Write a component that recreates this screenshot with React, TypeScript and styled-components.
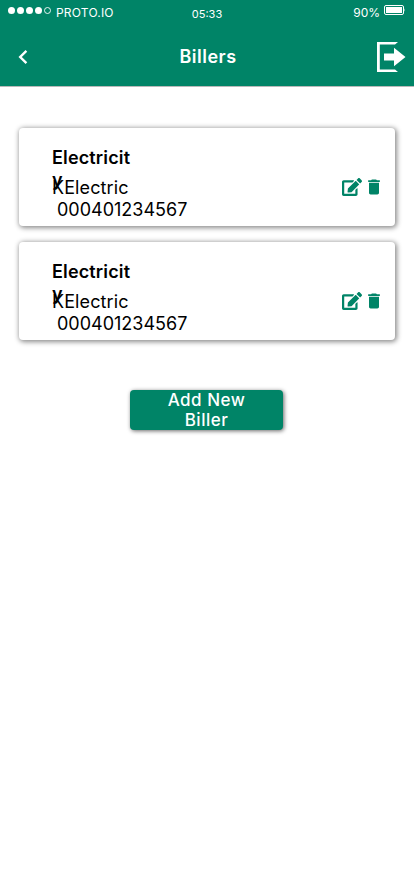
import React from "react";
import styled, { createGlobalStyle } from "styled-components";
import { FaEdit } from "react-icons/fa";
import { MdDelete } from "react-icons/md";

const GREEN = "#008467";

const GlobalStyle = createGlobalStyle`
  * { box-sizing: border-box; }
  body { margin: 0; background: #fff; font-family: Inter, "Liberation Sans", sans-serif; }
  p, h1, h2 { margin: 0; }
`;

const Screen = styled.div`
  width: 414px;
  height: 896px;
  background: #fff;
  overflow: hidden;
`;

const Header = styled.header`
  height: 86px;
  background: ${GREEN};
  color: #fff;
  box-shadow: 0 1px 0 #b9b9b9;
`;

const StatusBar = styled.div`
  height: 24px;
  display: grid;
  grid-template-columns: 1fr 60px 1fr;
  padding: 0 8px;
  font-size: 12px;
  line-height: 15px;
`;

const Carrier = styled.div`
  display: flex;
  align-items: flex-start;
  gap: 5px;
  padding-top: 5px;
  letter-spacing: 0.2px;
`;

const Signal = styled.svg`
  display: block;
  margin-top: 2px;
`;

const Clock = styled.time`
  padding-top: 7px;
  font-size: 11px;
  text-align: center;
`;

const Battery = styled.div`
  display: flex;
  justify-content: flex-end;
  gap: 4px;
  padding-top: 5px;
`;

const Nav = styled.div`
  display: grid;
  grid-template-columns: 56px 1fr 62px;
  align-items: center;
  height: 62px;
  padding: 4px 8px 0 16px;
`;

const Title = styled.h1`
  font-size: 18px;
  line-height: 22px;
  font-weight: 600;
  text-align: center;
  letter-spacing: 0.5px;
`;

const IconButton = styled.button<{ $end?: boolean }>`
  display: flex;
  justify-content: ${(p) => (p.$end ? "flex-end" : "flex-start")};
  padding: 0;
  border: 0;
  background: none;
  color: inherit;
`;

const Main = styled.main`
  display: flex;
  flex-direction: column;
  align-items: center;
  padding: 42px 18px 0;
`;

const List = styled.div`
  display: flex;
  flex-direction: column;
  gap: 16px;
  width: 376px;
`;

const Card = styled.article`
  display: flex;
  justify-content: space-between;
  height: 98px;
  padding: 19px 11px 0 33px;
  border-radius: 4px;
  background: #fff;
  box-shadow: 1px 1px 5px 1px rgba(0, 0, 0, 0.45);
  color: #000;
  font-size: 18px;
  line-height: 22px;
`;

const Details = styled.div`
  display: flex;
  flex-direction: column;
`;

const Category = styled.h2`
  width: 80px;
  height: 30px;
  font-size: 18px;
  line-height: 22px;
  font-weight: 600;
  letter-spacing: 0.15px;
  overflow-wrap: anywhere;
`;

const Company = styled.p`
  letter-spacing: 0.1px;
`;

const Account = styled.p`
  padding-left: 5px;
`;

const Actions = styled.div`
  display: flex;
  align-items: center;
  gap: 2px;
  height: 22px;
  margin-top: 29px;
  color: ${GREEN};
`;

const AddButton = styled.button`
  align-self: flex-start;
  width: 153px;
  height: 40px;
  margin: 50px 0 0 112px;
  padding: 0 30px;
  border: 0;
  border-radius: 4px;
  background: ${GREEN};
  box-shadow: 1px 1px 4px rgba(0, 0, 0, 0.6);
  color: #fff;
  font: 500 17px/20px Inter, "Liberation Sans", sans-serif;
  letter-spacing: 0.5px;
`;

const billers = [
  { id: 1, category: "Electricity", company: "KElectric", account: "000401234567" },
  { id: 2, category: "Electricity", company: "KElectric", account: "000401234567" },
];

export default function App() {
  return (
    <Screen>
      <GlobalStyle />
      <Header>
        <StatusBar>
          <Carrier>
            <Signal width="43" height="8" viewBox="0 0 43 8">
              {[3.5, 12.5, 21.5, 30.5].map((x) => (
                <circle key={x} cx={x} cy="3.5" r="3.5" fill="#fff" />
              ))}
              <circle cx="39.5" cy="3.5" r="3" fill="none" stroke="#fff" strokeWidth="0.9" />
            </Signal>
            <span>PROTO.IO</span>
          </Carrier>
          <Clock>05:33</Clock>
          <Battery>
            <span>90%</span>
            <svg width="22" height="10" viewBox="0 0 22 10">
              <rect x="0.5" y="0.5" width="19" height="9" rx="1.5" fill="none" stroke="#fff" />
              <rect x="2" y="2" width="16" height="6" fill="#fff" />
              <path d="M20 3.2 Q21.2 5 20 6.8 Z" fill="#fff" />
            </svg>
          </Battery>
        </StatusBar>
        <Nav>
          <IconButton aria-label="Back">
            <svg width="14" height="16" viewBox="0 0 14 16" fill="none" stroke="#fff" strokeWidth="2.4">
              <path d="M10.4 1.8 L4.2 8 L10.4 14.2" />
            </svg>
          </IconButton>
          <Title>Billers</Title>
          <IconButton $end aria-label="Log out">
            <svg width="29" height="30" viewBox="0 0 29 30" fill="#fff">
              <path d="M0 0H21L18 2.5H2.8V27.5H18L21 30H0Z" />
              <path d="M7 11.5H17V5.8L28.5 15L17 24.2V18.5H7Z" />
            </svg>
          </IconButton>
        </Nav>
      </Header>
      <Main>
        <List>
          {billers.map((b) => (
            <Card key={b.id}>
              <Details>
                <Category>{b.category}</Category>
                <Company>{b.company}</Company>
                <Account>{b.account}</Account>
              </Details>
              <Actions>
                <FaEdit size={20} />
                <MdDelete size={20} />
              </Actions>
            </Card>
          ))}
        </List>
        <AddButton>Add New Biller</AddButton>
      </Main>
    </Screen>
  );
}
